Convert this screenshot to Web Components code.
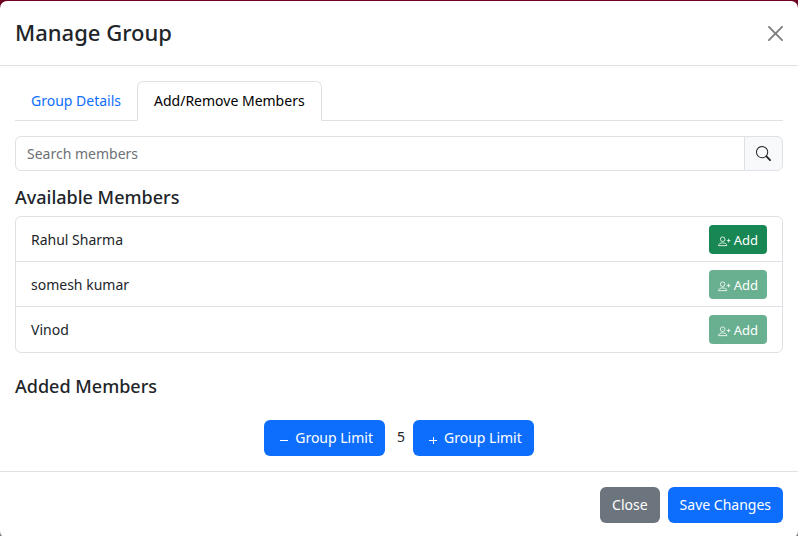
<!DOCTYPE html>
<html lang="en">
<head>
<meta charset="utf-8">
<meta name="viewport" content="width=device-width, initial-scale=1">
<title>Manage Group</title>
<style>
html { min-height: 100%; background: linear-gradient(#6b0020 0 50%, #808080 50%); }
body { margin: 0; font: 14px/22px "Segoe UI", "Noto Sans", sans-serif; color: #212529; }
</style>
</head>
<body>
<group-dialog heading="Manage Group">
  <tab-bar slot="body"></tab-bar>
  <member-search slot="body"></member-search>
  <member-section slot="body" heading="Available Members">
    <member-row>Rahul Sharma</member-row>
    <member-row disabled>somesh kumar</member-row>
    <member-row disabled>Vinod</member-row>
  </member-section>
  <member-section slot="body" heading="Added Members"></member-section>
  <group-limit slot="body" value="5"></group-limit>
  <action-button slot="footer" variant="secondary">Close</action-button>
  <action-button slot="footer">Save Changes</action-button>
</group-dialog>
<script>
function define(name, render) {
  customElements.define(name, class extends HTMLElement {
    constructor() {
      super();
      this.attachShadow({ mode: "open" });
    }
    connectedCallback() {
      const t = document.createElement("template");
      t.innerHTML = "<style>*{box-sizing:border-box}:host{display:block;box-sizing:border-box}button,input{font:inherit;margin:0}button{cursor:pointer}</style>" + render(this);
      this.shadowRoot.replaceChildren(t.content.cloneNode(true));
    }
  });
}

define("group-dialog", el => `
<style>
:host { margin-top: 1px; background: #fff; border-radius: 7px; }
header { display: flex; align-items: center; justify-content: space-between; padding: 16px 15px; border-bottom: 1px solid #dee2e6; }
h1 { margin: 0; font-size: 22px; line-height: 30px; padding-bottom: 2px; font-weight: 500; }
.close { display: flex; padding: 0; border: 0; background: none; color: #000; opacity: .5; }
main { display: flex; flex-direction: column; padding: 15px; }
footer { display: flex; justify-content: flex-end; gap: 8px; padding: 15px; border-top: 1px solid #dee2e6; }
</style>
<header><h1>${el.getAttribute("heading")}</h1>
<button class="close" aria-label="Close dialog"><svg width="15" height="15" viewBox="0 0 16 16" fill="currentColor"><path d="M.293.293a1 1 0 0 1 1.414 0L8 6.586 14.293.293a1 1 0 1 1 1.414 1.414L9.414 8l6.293 6.293a1 1 0 0 1-1.414 1.414L8 9.414l-6.293 6.293a1 1 0 0 1-1.414-1.414L6.586 8 .293 1.707a1 1 0 0 1 0-1.414z"/></svg></button></header>
<main><slot name="body"></slot></main>
<footer><slot name="footer"></slot></footer>`);

define("tab-bar", () => `
<style>
nav { display: flex; border-bottom: 1px solid #dee2e6; }
button { margin-bottom: -1px; padding: 8px 15px; line-height: 22px; border: 1px solid transparent; border-radius: 6px 6px 0 0; background: none; color: #0d6efd; }
[aria-selected=true] { color: #000; background: #fff; border-color: #dee2e6 #dee2e6 #fff; padding: 8px 16px; }
</style>
<nav role="tablist"><button role="tab" aria-selected="false">Group Details</button><button role="tab" aria-selected="true">Add/Remove Members</button></nav>`);

define("member-search", () => `
<style>
:host { margin: 15px 0; }
form { display: flex; }
input { flex: 1; min-width: 0; height: 35px; padding: 0 11px; border: 1px solid #dee2e6; border-radius: 6px 0 0 6px; background: #fff; color: inherit; }
input::placeholder { color: #6c7075; opacity: 1; }
button { display: flex; align-items: center; padding: 0 11px; margin-left: -1px; border: 1px solid #dee2e6; border-radius: 0 6px 6px 0; background: #f8f9fa; color: #212529; }
</style>
<form role="search"><input type="text" placeholder="Search members" aria-label="Search members"><button type="button" aria-label="Search"><svg width="15" height="15" viewBox="0 0 16 16" fill="currentColor"><path d="M11.742 10.344a6.5 6.5 0 1 0-1.397 1.398h-.001q.044.06.098.115l3.85 3.85a1 1 0 0 0 1.415-1.414l-3.85-3.85a1 1 0 0 0-.115-.1zM12 6.5a5.5 5.5 0 1 1-11 0 5.5 5.5 0 0 1 11 0"/></svg></button></form>`);

define("member-section", el => `
<style>
h2 { margin: 0 0 8px; font-size: 18px; line-height: 22px; font-weight: 500; }
.list { border: 1px solid #dee2e6; border-radius: 6px; margin-bottom: 22px; }
</style>
<h2>${el.getAttribute("heading")}</h2>
${el.children.length ? '<div class="list" role="list"><slot></slot></div>' : ""}`);

define("member-row", el => `
<style>
:host { display: flex; align-items: center; justify-content: space-between; padding: 8px 15px; }
:host(:not(:last-child)) { border-bottom: 1px solid #dee2e6; padding-bottom: 7px; }
button { display: flex; align-items: center; gap: 3px; height: 29px; padding: 0 9px; border: 0; border-radius: 4px; background: #198754; color: #fff; font-size: 13px; line-height: 20px; }
button:disabled { opacity: .65; }
svg { margin-top: 4px; }
</style>
<span><slot></slot></span>
<button${el.hasAttribute("disabled") ? " disabled" : ""}><svg width="13" height="11" viewBox="0 0 14 12" fill="none" stroke="currentColor" stroke-width=".9"><circle cx="5" cy="3.5" r="2.5"/><path d="M.5 10.5C.5 8.6 2.2 7.5 5 7.5s4.500 1.100 4.500 3z" stroke-linejoin="round"/><path d="M11.500 3v4M9.500 5h4"/></svg>Add</button>`);

define("group-limit", el => `
<style>
:host { display: flex; justify-content: center; align-items: center; margin-top: 15px; }
output { padding: 0 8px 0 12px; margin-bottom: 3px; }
svg { margin: 4px 6px 0 3px; flex: none; }
</style>
<action-button><svg width="10" height="10" viewBox="0 0 10 10" stroke="currentColor"><path d="M1 5.500h8"/></svg>Group Limit</action-button>
<output>${el.getAttribute("value")}</output>
<action-button><svg width="10" height="10" viewBox="0 0 10 10" stroke="currentColor"><path d="M1 5.500h8M5.500 2v7"/></svg>Group Limit</action-button>`);

define("action-button", () => `
<style>
button { display: flex; align-items: center; height: 36px; padding: 0 12px; border: 0; border-radius: 6px; background: #0d6efd; color: #fff; white-space: nowrap; }
:host([variant=secondary]) button { background: #6c757d; }
</style>
<button><slot></slot></button>`);
</script>
</body>
</html>
